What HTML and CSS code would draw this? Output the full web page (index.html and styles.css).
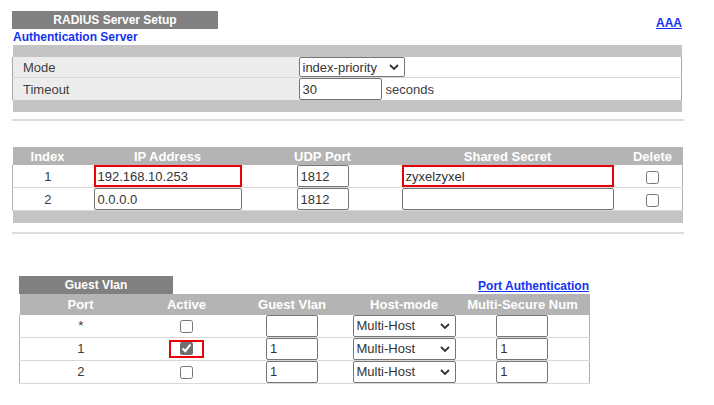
FILE: index.html
```html
<!DOCTYPE html>
<html>
<head>
<meta charset="utf-8">
<link rel="stylesheet" href="styles.css">
</head>
<body>
<div class="page">
  <div class="top">
    <div class="tab title-tab">RADIUS Server Setup</div>
    <a class="link aaa" href="#">AAA</a>
  </div>
  <div class="subhead">Authentication Server</div>

  <table class="t1">
    <colgroup><col class="c-lbl"><col></colgroup>
    <tr class="band"><td colspan="2"></td></tr>
    <tr class="frow mode"><td class="lbl">Mode</td><td class="val"><span class="sel w-mode"><select><option>index-priority</option></select><svg class="chev" width="10" height="6" viewBox="0 0 10 6"><path d="M1 1l4 4 4-4" fill="none" stroke="#333" stroke-width="1.8"/></svg></span></td></tr>
    <tr class="frow"><td class="lbl">Timeout</td><td class="val"><input class="in w-timeout" value="30"><span class="unit">seconds</span></td></tr>
    <tr class="band"><td colspan="2"></td></tr>
  </table>

  <div class="rule rule1"></div>

  <table class="t2">
    <colgroup><col class="c-idx"><col class="c-ip"><col class="c-udp"><col class="c-sec"><col class="c-del"></colgroup>
    <tr class="head"><th>Index</th><th>IP Address</th><th>UDP Port</th><th>Shared Secret</th><th>Delete</th></tr>
    <tr class="row"><td class="first">1</td><td><input class="in w-ip hl" value="192.168.10.253"></td><td><input class="in w-udp" value="1812"></td><td><input class="in w-sec hl" value="zyxelzyxel"></td><td class="last"><input type="checkbox" class="cb"></td></tr>
    <tr class="row"><td class="first">2</td><td><input class="in w-ip" value="0.0.0.0"></td><td><input class="in w-udp" value="1812"></td><td><input class="in w-sec" value=""></td><td class="last"><input type="checkbox" class="cb"></td></tr>
    <tr class="band"><td colspan="5"></td></tr>
  </table>

  <div class="rule rule2"></div>

  <div class="sec3">
    <div class="top3">
      <div class="tab guest-tab">Guest Vlan</div>
      <a class="link" href="#">Port Authentication</a>
    </div>
    <table class="t3">
      <colgroup><col class="c-port"><col class="c-act"><col class="c-gv"><col class="c-hm"><col class="c-ms"></colgroup>
      <tr class="head"><th>Port</th><th>Active</th><th>Guest Vlan</th><th>Host-mode</th><th>Multi-Secure Num</th></tr>
      <tr class="row"><td class="first">*</td><td><input type="checkbox" class="cb"></td><td><input class="in w-gv" value=""></td><td><span class="sel w-hm"><select><option>Multi-Host</option></select><svg class="chev" width="10" height="6" viewBox="0 0 10 6"><path d="M1 1l4 4 4-4" fill="none" stroke="#333" stroke-width="1.8"/></svg></span></td><td class="last"><input class="in w-gv" value=""></td></tr>
      <tr class="row"><td class="first">1</td><td><span class="hlbox"><input type="checkbox" class="cb" checked></span></td><td><input class="in w-gv" value="1"></td><td><span class="sel w-hm"><select><option>Multi-Host</option></select><svg class="chev" width="10" height="6" viewBox="0 0 10 6"><path d="M1 1l4 4 4-4" fill="none" stroke="#333" stroke-width="1.8"/></svg></span></td><td class="last"><input class="in w-gv" value="1"></td></tr>
      <tr class="row"><td class="first">2</td><td><input type="checkbox" class="cb"></td><td><input class="in w-gv" value="1"></td><td><span class="sel w-hm"><select><option>Multi-Host</option></select><svg class="chev" width="10" height="6" viewBox="0 0 10 6"><path d="M1 1l4 4 4-4" fill="none" stroke="#333" stroke-width="1.8"/></svg></span></td><td class="last"><input class="in w-gv" value="1"></td></tr>
    </table>
  </div>
</div>
</body>
</html>
```
FILE: styles.css
```css
* { box-sizing: border-box; }
body {
  margin: 0;
  background: #fff;
  font-family: "Liberation Sans", Arial, sans-serif;
  font-size: 13px;
  color: #3a3a3a;
}
.page {
  padding: 11px 0 0 12px;
  width: 684px;
}
.top {
  display: flex;
  justify-content: space-between;
  align-items: flex-start;
  width: 670px;
}
.tab {
  background: #808080;
  color: #fff;
  font-weight: bold;
  font-size: 12px;
  height: 18px;
  line-height: 18px;
  text-align: center;
}
.title-tab { width: 206px; }
.link {
  color: #1433f0;
  font-weight: bold;
  font-size: 12px;
  text-decoration: underline;
}
.aaa { margin-top: 5px; line-height: 14px; }
.subhead {
  color: #1433f0;
  font-weight: bold;
  font-size: 12px;
  height: 15px;
  line-height: 15px;
  padding-left: 1px;
}
table {
  border-collapse: collapse;
  table-layout: fixed;
}
td, th { padding: 0; }
.band td {
  background: #c4c4c4;
  height: 12px;
}
.t1 { width: 670px; }
.c-lbl { width: 286px; }
.t1 .lbl {
  background: #ececec;
  border-left: 1px solid #a8a8a8;
  padding-left: 10px;
  color: #404040;
  text-align: left;
}
.t1 .val {
  border-right: 1px solid #a8a8a8;
  background: #fff;
  text-align: left;
}
.t1 .frow td { height: 22px; }
.t1 .frow.mode td { height: 20px; border-bottom: 1px solid #d8d8d8; }
.unit { margin-left: 4px; color: #404040; vertical-align: middle; }

.in {
  height: 22px;
  border: 1px solid #767676;
  border-radius: 2px;
  padding: 0 3px;
  font-family: "Liberation Sans", Arial, sans-serif;
  font-size: 13px;
  color: #333;
  background: #fff;
  vertical-align: middle;
  margin: 0;
}
.in.hl { border: 2px solid #e8000b; border-radius: 0; padding: 0 2px; }
.w-timeout { width: 83px; }
.w-ip { width: 148px; }
.w-udp { width: 52px; }
.w-sec { width: 212px; }
.w-gv { width: 52px; }

.sel {
  position: relative;
  display: inline-block;
  vertical-align: middle;
}
.sel select {
  -webkit-appearance: none;
  appearance: none;
  width: 100%;
  height: 100%;
  border: 1px solid #767676;
  border-radius: 2px;
  background: #fff;
  font-family: "Liberation Sans", Arial, sans-serif;
  font-size: 13px;
  color: #333;
  padding: 0 0 0 3px;
  margin: 0;
}
.sel .chev {
  position: absolute;
  right: 6px;
  top: 50%;
  margin-top: -3px;
  pointer-events: none;
}
.w-mode { width: 106px; height: 20px; }
.w-hm { width: 103px; height: 22px; }

.rule {
  height: 2px;
  width: 672px;
  background: #dedede;
}
.rule1 { margin-top: 7px; }
.rule2 { margin-top: 9px; }

.t2 { width: 670px; margin-top: 26px; }
.c-idx { width: 70px; }
.c-ip { width: 170px; }
.c-udp { width: 140px; }
.c-sec { width: 230px; }
.c-del { width: 60px; }

.head th {
  background: #b4b4b4;
  color: #fff;
  font-weight: bold;
  font-size: 13px;
  text-align: center;
}
.t2 .head th { height: 18px; }
.row td {
  text-align: center;
  height: 22px;
  border-bottom: 1px solid #d8d8d8;
}
.row td.first { border-left: 1px solid #b0b0b0; }
.row td.last { border-right: 1px solid #b0b0b0; }

.cb {
  width: 13px;
  height: 13px;
  margin: 0;
  vertical-align: middle;
  accent-color: #6f6f6f;
}

.sec3 {
  margin-top: 42px;
  margin-left: 7px;
  width: 570px;
}
.top3 {
  display: flex;
  justify-content: space-between;
  align-items: flex-start;
}
.guest-tab { width: 154px; }
.top3 .link { margin-top: 3px; line-height: 14px; }
.t3 { width: 570px; }
.c-port { width: 122px; }
.c-act { width: 90px; }
.c-gv { width: 121px; }
.c-hm { width: 103px; }
.c-ms { width: 134px; }
.t3 .head th { height: 21px; }
.hlbox {
  display: inline-block;
  border: 2px solid #e8000b;
  padding: 0 9px;
  height: 18px;
  line-height: 12px;
  vertical-align: middle;
}
.hlbox .cb { vertical-align: middle; }
```
